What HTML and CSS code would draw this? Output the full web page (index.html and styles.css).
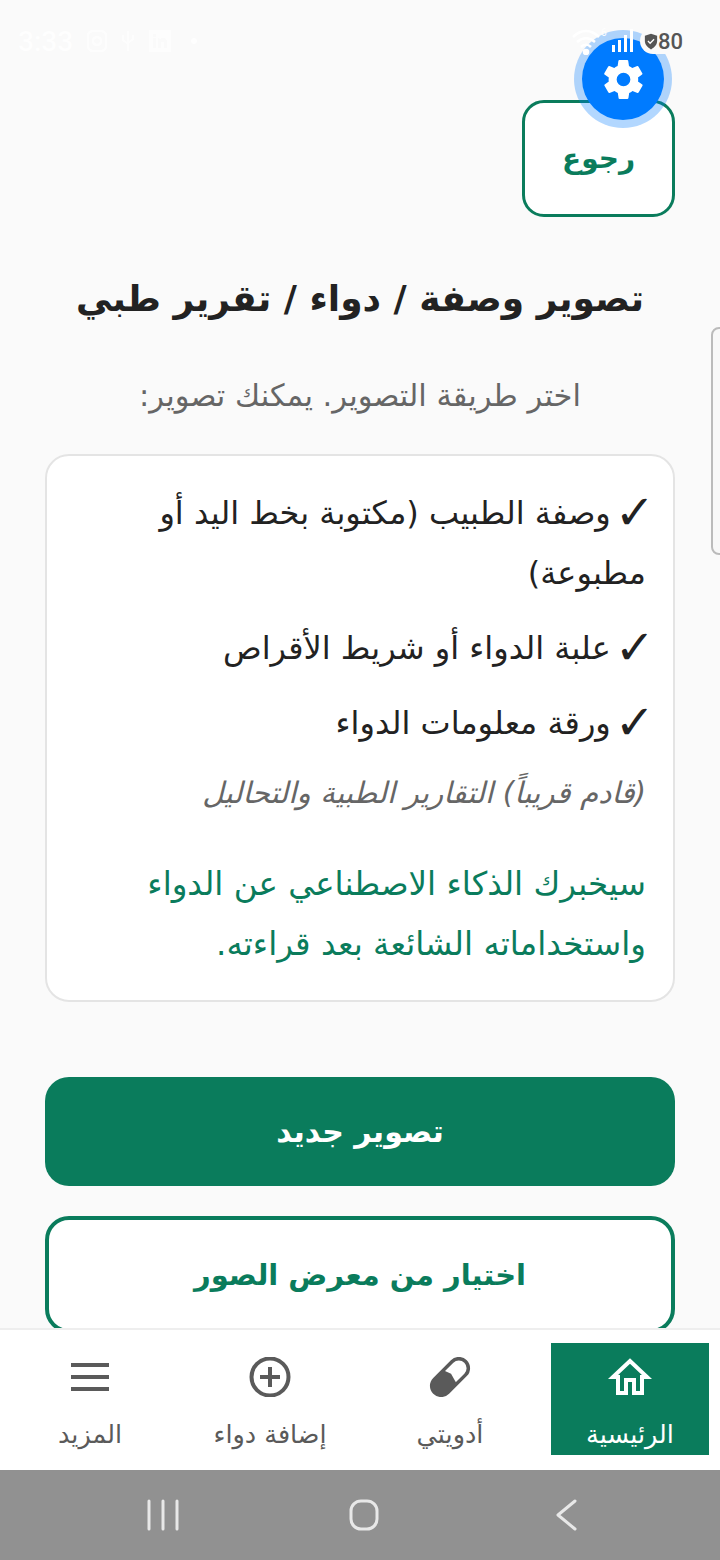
FILE: index.html
```html
<!DOCTYPE html>
<html lang="ar" dir="rtl">

<head>
  <meta charset="UTF-8">
  <meta name="viewport" content="width=device-width, initial-scale=1.0">
  <title>تصوير وصفة</title>
  <link rel="stylesheet" href="styles.css">
</head>

<body>
  <div class="app">
    <div class="status" dir="ltr">
      <div class="status-left">
        <span class="time">3:33</span>
        <svg width="22" height="24" viewBox="0 0 22 24" fill="none" stroke="#fff" stroke-width="2.5"><rect x="2" y="2" width="18" height="20" rx="5"/><circle cx="11" cy="12" r="4"/></svg>
        <svg width="14" height="22" viewBox="0 0 14 22" fill="none" stroke="#fff" stroke-width="2"><path d="M7 1v20M2 5v5l5 4M12 5v4l-5 4"/></svg>
        <svg width="24" height="24" viewBox="0 0 24 24"><path fill="#fff" fill-rule="evenodd" d="M1 1h22v22H1zM5 9v10h3V9zM5 5v3h3V5zM10 9v10h3v-6h3v6h3v-7l-2-3h-4l-0 1-3-1z"/></svg>
        <span class="dot"></span>
      </div>
      <div class="status-right">
        <svg width="36" height="28" viewBox="0 0 36 28" fill="none" stroke="#fff" stroke-width="2.5"><path d="M1 10c8-8 18-8 26 0M5 15c6-5 12-5 18 0M9 20c3-3 7-3 10 0"/><circle cx="14" cy="25" r="2" fill="#fff"/><text x="29" y="9" font-size="10" font-family="Roboto" fill="#fff" stroke="none">6</text></svg>
        <svg class="bars" width="22" height="24" viewBox="0 0 22 24" fill="#fff"><rect x="0" y="16" width="3" height="7"/><rect x="6" y="11" width="3" height="12"/><rect x="12" y="6" width="3" height="17"/><rect x="18" y="0" width="3" height="23"/></svg>
        <span class="battery">
          <svg width="14" height="17" viewBox="0 0 16 18"><path fill="#555" d="M8 0l7 2.500v6c0 4-3 7.500-7 9.500-4-2-7-5.500-7-9.500v-6z"/><path fill="none" stroke="#fff" stroke-width="1.500" d="M4.500 8.500l2.500 2.500 4.500-4.500"/></svg>
          80
        </span>
      </div>
    </div>

    <button class="gear">
      <svg width="47" height="47" viewBox="0 0 24 24"><path fill="#fff" fill-rule="evenodd" d="M19.400 13c.1-.3.100-.7.100-1s0-.7-.1-1l2.100-1.600c.2-.2.300-.4.100-.6l-2-3.500c-.1-.2-.4-.3-.6-.2l-2.500 1c-.5-.4-1.100-.7-1.700-1l-.4-2.700c0-.2-.2-.4-.5-.4h-4c-.2 0-.4.200-.5.400l-.4 2.700c-.6.200-1.100.6-1.700 1l-2.500-1c-.2-.1-.5 0-.6.200l-2 3.500c-.1.200-.1.500.1.600L4.500 11c0 .3-.1.700-.1 1s0 .7.100 1l-2.100 1.600c-.2.200-.3.400-.1.600l2 3.500c.1.200.4.300.6.200l2.500-1c.5.400 1.100.7 1.700 1l.4 2.700c0 .2.200.4.500.4h4c.2 0 .4-.2.500-.4l.4-2.700c.6-.2 1.100-.6 1.700-1l2.500 1c.2.100.5 0 .6-.2l2-3.500c.1-.2.100-.5-.1-.6zM12 15.500a3.500 3.500 0 1 1 0-7 3.500 3.500 0 0 1 0 7z"/></svg>
    </button>

    <span class="side-tab"></span>

    <main class="page">
      <a class="back" href="#">رجوع</a>
      <h1>تصوير وصفة / دواء / تقرير طبي</h1>
      <p class="sub">اختر طريقة التصوير. يمكنك تصوير:</p>

      <div class="card">
        <ul>
          <li><span class="check">✓</span>وصفة الطبيب (مكتوبة بخط اليد أو مطبوعة)</li>
          <li><span class="check">✓</span>علبة الدواء أو شريط الأقراص</li>
          <li><span class="check">✓</span>ورقة معلومات الدواء</li>
          <li class="soon">(قادم قريباً) التقارير الطبية والتحاليل</li>
        </ul>
        <p class="note">سيخبرك الذكاء الاصطناعي عن الدواء واستخداماته الشائعة بعد قراءته.</p>
      </div>

      <a class="btn btn-main" href="#">تصوير جديد</a>
      <a class="btn btn-line" href="#">اختيار من معرض الصور</a>
    </main>

    <nav class="tabs">
      <a class="tab current" href="#">
        <svg width="44" height="40" viewBox="0 0 44 40" fill="none" stroke="#fff" stroke-width="4"><path d="M5 20L22 4l17 16h-5v16h-8V23h-8v13h-8V20z"/></svg>
        <span>الرئيسية</span>
      </a>
      <a class="tab" href="#">
        <svg width="44" height="40" viewBox="0 0 44 40"><g transform="rotate(45 22 20)"><rect x="12.500" y="-2" width="19" height="44" rx="9.500" fill="#fff" stroke="#5a5a5a" stroke-width="3.500"/><path fill="#5a5a5a" d="M12.500 20l8-3 11 3v12.500a9.500 9.500 0 0 1-19 0z"/></g></svg>
        <span>أدويتي</span>
      </a>
      <a class="tab" href="#">
        <svg width="44" height="40" viewBox="0 0 44 40" fill="none" stroke="#5a5a5a"><circle cx="22" cy="20" r="18.500" stroke-width="4"/><path stroke-width="4" d="M22 10v20M12 20h20"/></svg>
        <span>إضافة دواء</span>
      </a>
      <a class="tab" href="#">
        <svg width="44" height="40" viewBox="0 0 44 40" fill="#5a5a5a"><rect x="3" y="6" width="38" height="4"/><rect x="3" y="18" width="38" height="4"/><rect x="3" y="30" width="38" height="4"/></svg>
        <span>المزيد</span>
      </a>
    </nav>

    <div class="sysbar" dir="ltr">
      <svg width="32" height="32" viewBox="0 0 32 32" stroke="#e8e8e8" stroke-width="3" stroke-linecap="round"><path d="M2 2v28M16 2v28M30 2v28"/></svg>
      <svg width="32" height="32" viewBox="0 0 32 32" fill="none" stroke="#e8e8e8" stroke-width="3"><rect x="3" y="2" width="26" height="28" rx="10"/></svg>
      <svg width="32" height="32" viewBox="0 0 32 32" fill="none" stroke="#e8e8e8" stroke-width="3" stroke-linecap="round" stroke-linejoin="round"><path d="M26 2L9 16l17 14"/></svg>
    </div>
  </div>
</body>

</html>
```

FILE: styles.css
```css
* {
  margin: 0;
  padding: 0;
  box-sizing: border-box;
}

ul {
  list-style: none
}

a {
  text-decoration: none;
}

body {
  font-family: "DejaVu Sans", "Noto Sans", sans-serif;
  background-color: #fafafa;
}

.app {
  width: 720px;
  height: 1560px;
  display: flex;
  flex-direction: column;
  position: relative;
  overflow: hidden;
}

/* status bar, almost invisible on the light page */
.status {
  position: absolute;
  top: 26px;
  left: 18px;
  right: 31px;
  display: flex;
  justify-content: space-between;
  align-items: center;
  height: 30px;
  z-index: 3;
}

.status-left,
.status-right {
  display: flex;
  align-items: center;
  gap: 13px;
}

.status-left svg {
  opacity: .75;
}

.status-right {
  gap: 4px;
}

.time {
  font-family: Roboto, sans-serif;
  font-size: 28px;
  color: #fff;
  opacity: .8;
  font-weight: 500;
}

.dot {
  width: 6px;
  height: 6px;
  margin-left: 6px;
  border-radius: 50%;
  background-color: #fff;
  opacity: .75;
}

.bars {
  margin-right: 2px;
}

.battery {
  display: flex;
  align-items: center;
  gap: 0;
  padding: 0 6px 0 4px;
  height: 26px;
  border-radius: 13px;
  background-color: #fafafa;
  color: #555;
  font-family: Roboto, sans-serif;
  font-size: 22px;
  font-weight: 500;
}

.gear {
  position: absolute;
  top: 38px;
  left: 582px;
  width: 82px;
  height: 82px;
  border: 0;
  border-radius: 50%;
  background-color: #007bff;
  box-shadow: 0 0 0 8px rgba(0, 123, 255, .3);
  display: flex;
  align-items: center;
  justify-content: center;
  z-index: 2;
}

.side-tab {
  position: absolute;
  top: 327px;
  right: -10px;
  width: 19px;
  height: 228px;
  border: 2px solid #bbb;
  border-radius: 8px;
  background-color: #f8f8f8;
}

.page {
  flex: 1;
  min-height: 0;
  overflow: hidden;
  padding: 100px 45px 0;
}

.back {
  display: flex;
  align-items: center;
  justify-content: center;
  width: 153px;
  height: 117px;
  border: 3px solid #0a7c5c;
  border-radius: 22px;
  background-color: #fff;
  color: #0a7c5c;
  font-size: 28px;
  font-weight: 700;
}

h1 {
  margin-top: 53px;
  font-size: 36px;
  line-height: 58px;
  text-align: center;
  color: #222;
}

.sub {
  margin-top: 46px;
  font-size: 30.500px;
  line-height: 44px;
  text-align: center;
  color: #666;
}

.card {
  margin-top: 36px;
  height: 548px;
  padding: 27px;
  border: 2px solid #e4e4e4;
  border-radius: 24px;
  background-color: #fff;
}

.card li {
  margin-bottom: 15px;
  font-size: 32px;
  line-height: 60px;
  color: #222;
}

.check {
  margin-right: -9px;
  margin-left: 4px;
  font-size: 48px;
  line-height: 0;
  vertical-align: -5px;
}

.card li.soon {
  font-size: 29.500px;
  line-height: 50px;
  font-style: italic;
  color: #666;
}

.note {
  margin-top: 36px;
  font-size: 32.500px;
  line-height: 60px;
  color: #0a7c5c;
}

.btn {
  display: flex;
  align-items: center;
  justify-content: center;
  font-size: 30px;
  font-weight: 700;
  border-radius: 24px;
}

.btn-main {
  margin-top: 75px;
  height: 109px;
  background-color: #0a7c5c;
  color: #fff;
}

.btn-line {
  margin-top: 30px;
  height: 117px;
  border: 4px solid #0a7c5c;
  background-color: #fff;
  color: #0a7c5c;
  font-size: 29px;
}

.tabs {
  position: relative;
  height: 142px;
  display: flex;
  gap: 22px;
  padding: 13px 11px 0;
  border-top: 2px solid #eee;
  background-color: #fff;
}

.tab {
  flex: 1;
  height: 112px;
  display: flex;
  flex-direction: column;
  align-items: center;
  padding-top: 14px;
  gap: 22px;
  font-size: 25.500px;
  line-height: 30px;
  color: #5a5a5a;
}

.tab.current {
  background-color: #0a7c5c;
  color: #fff;
}

.sysbar {
  height: 90px;
  display: flex;
  align-items: center;
  gap: 169px;
  padding-left: 147px;
  background-color: #919191;
}
```
